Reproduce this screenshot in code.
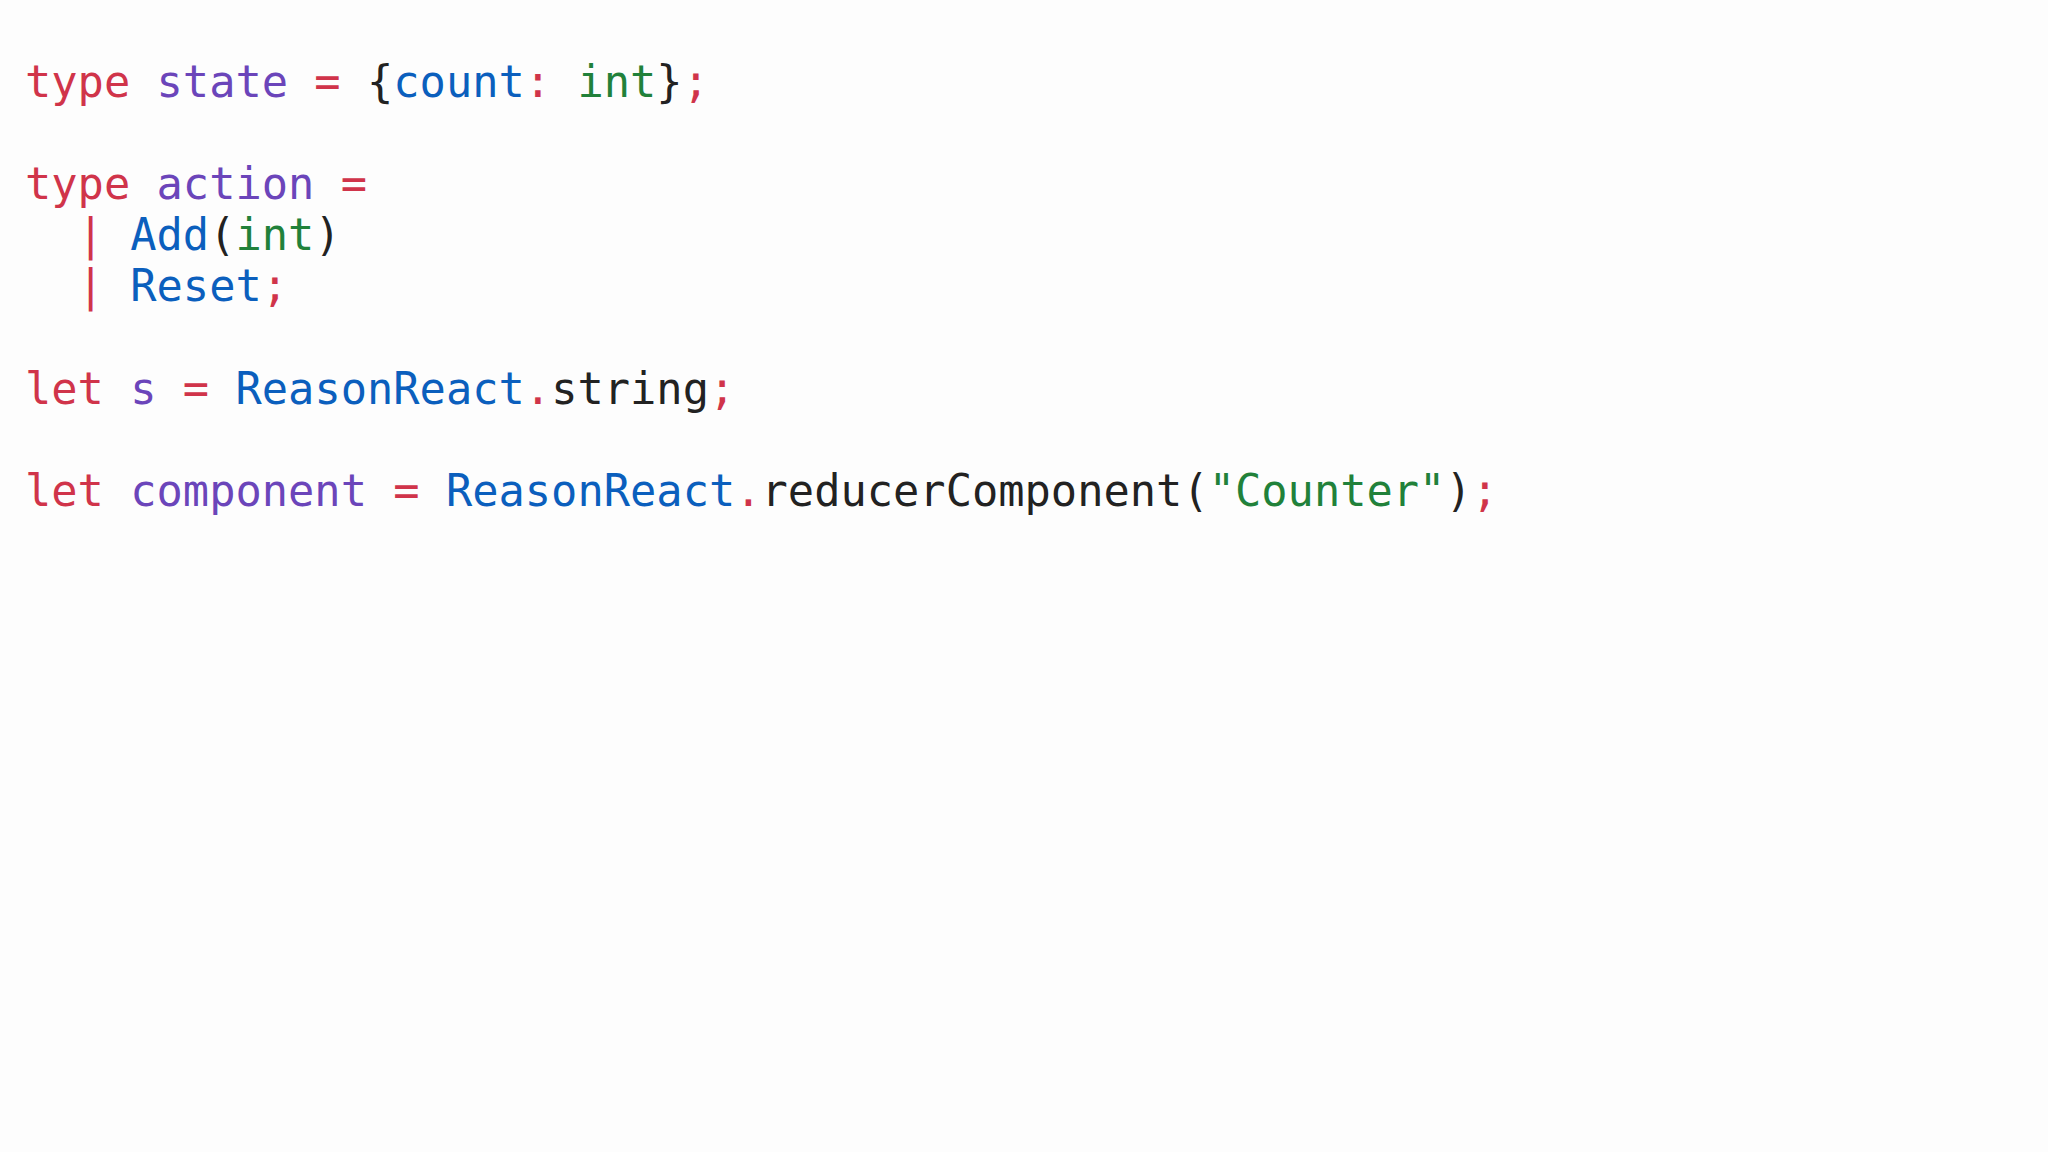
const red = "text-[#d0344a]";
const purple = "text-[#6b45ba]";
const blue = "text-[#0b5fbd]";
const green = "text-[#21813a]";

function Code() {
  return (
    <pre className="font-['DejaVu_Sans_Mono',monospace] text-[43.7px] leading-[51.1px] text-[#222222]">
      <span className={red}>type</span> <span className={purple}>state</span>{" "}
      <span className={red}>=</span> {"{"}
      <span className={blue}>count</span>
      <span className={red}>:</span> <span className={green}>int</span>
      {"}"}
      <span className={red}>;</span>
      {"\n\n"}
      <span className={red}>type</span> <span className={purple}>action</span>{" "}
      <span className={red}>=</span>
      {"\n  "}
      <span className={red}>|</span> <span className={blue}>Add</span>(
      <span className={green}>int</span>)
      {"\n  "}
      <span className={red}>|</span> <span className={blue}>Reset</span>
      <span className={red}>;</span>
      {"\n\n"}
      <span className={red}>let</span> <span className={purple}>s</span>{" "}
      <span className={red}>=</span> <span className={blue}>ReasonReact</span>
      <span className={red}>.</span>string<span className={red}>;</span>
      {"\n\n"}
      <span className={red}>let</span> <span className={purple}>component</span>{" "}
      <span className={red}>=</span> <span className={blue}>ReasonReact</span>
      <span className={red}>.</span>reducerComponent(
      <span className={green}>"Counter"</span>)<span className={red}>;</span>
    </pre>
  );
}

export default function App() {
  return (
    <div className="h-[1152px] w-full bg-[#fdfdfd] pl-[25px] pt-[56px]">
      <Code />
    </div>
  );
}
